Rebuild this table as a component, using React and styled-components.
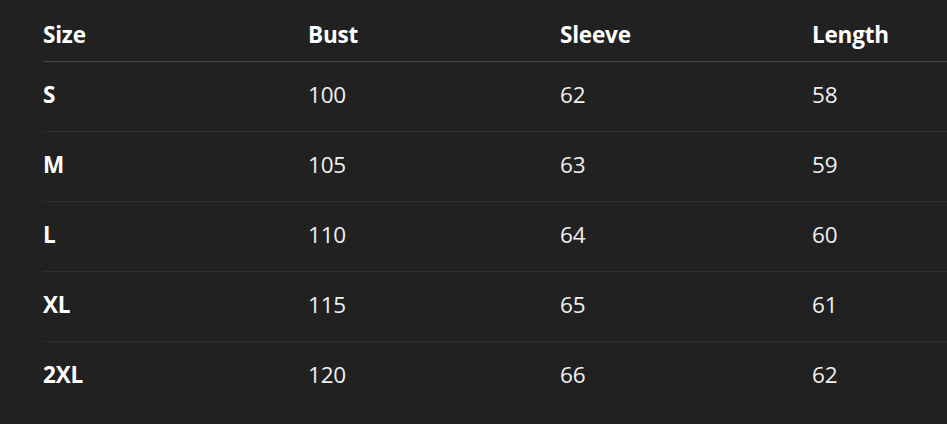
import React from "react";
import styled, { createGlobalStyle } from "styled-components";

const GlobalStyle = createGlobalStyle`
  html, body {
    margin: 0;
    padding: 0;
    background: #212121;
  }
  body {
    font-family: "Open Sans", "Noto Sans", sans-serif;
    color: #f2f2f2;
    overflow: hidden;
  }
`;

const Wrapper = styled.div`
  padding-left: 43px;
`;

const Row = styled.div`
  display: grid;
  grid-template-columns: 265px 252px 252px 1fr;
  align-items: center;
  height: ${(props) => (props.head ? "52px" : "69px")};
  padding-top: ${(props) => (props.head ? "9px" : "0")};
  border-bottom: ${(props) =>
    props.last ? "none" : props.head ? "1px solid #464646" : "1px solid #2e2e2e"};
`;

const Cell = styled.div`
  font-size: 22.5px;
  line-height: 28px;
  padding-bottom: ${(props) => (props.head ? "0" : "4px")};
  font-weight: ${(props) => (props.bold ? 700 : 400)};
  color: ${(props) => (props.bold ? "#ffffff" : "#f0f0f0")};
  white-space: nowrap;
  letter-spacing: -0.2px;
`;

const headers = ["Size", "Bust", "Sleeve", "Length"];

const sizes = [
  ["S", 100, 62, 58],
  ["M", 105, 63, 59],
  ["L", 110, 64, 60],
  ["XL", 115, 65, 61],
  ["2XL", 120, 66, 62],
];

const App = () => {
  return (
    <>
      <GlobalStyle />
      <Wrapper>
        <Row head>
          {headers.map((h) => (
            <Cell bold head key={h}>
              {h}
            </Cell>
          ))}
        </Row>
        {sizes.map((row, i) => (
          <Row key={row[0]} last={i === sizes.length - 1}>
            {row.map((val, j) => (
              <Cell bold={j === 0} key={j}>
                {val}
              </Cell>
            ))}
          </Row>
        ))}
      </Wrapper>
    </>
  );
};

export default App;
